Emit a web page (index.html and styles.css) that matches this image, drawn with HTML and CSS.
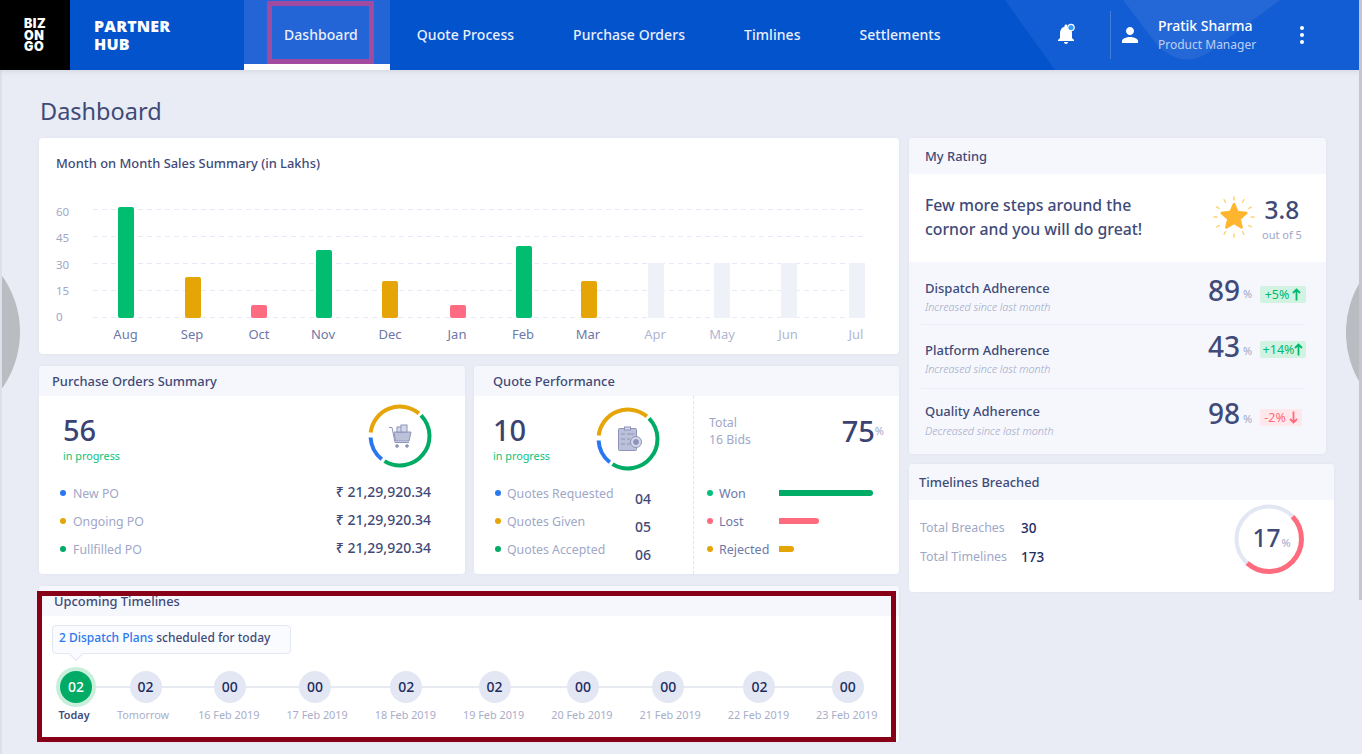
FILE: index.html
```html
<!DOCTYPE html>
<html lang="en">
<head>
    <meta charset="UTF-8">
    <meta name="viewport" content="width=device-width, initial-scale=1.0">
    <title>Partner Hub - Dashboard</title>
    <link rel="stylesheet" href="styles.css">
</head>
<body>
    <!-- Top bar -->
    <header class="topbar">
        <svg class="topbar-bg" width="1362" height="70" viewBox="0 0 1362 70">
            <path d="M1005 0L1055 70H1362V0Z" fill="#135dd4"/>
            <path d="M1123 0L1158 46Q1185 72 1215 48L1280 0Z" fill="#2467d6"/>
        </svg>
        <div class="logo">BIZ<br>ON<br>GO</div>
        <div class="brand">PARTNER<br>HUB</div>
        <nav class="nav">
            <a class="nav-item active">Dashboard<span class="mark-purple"></span></a>
            <a class="nav-item">Quote Process</a>
            <a class="nav-item">Purchase Orders</a>
            <a class="nav-item">Timlines</a>
            <a class="nav-item">Settlements</a>
        </nav>
        <div class="user-area">
            <svg class="bell" width="24" height="24" viewBox="0 0 24 24">
                <path fill="#fff" d="M12 22c1.1 0 2-.9 2-2h-4c0 1.1.9 2 2 2zm6-6v-5c0-3.07-1.63-5.64-4.5-6.32V4c0-.83-.67-1.5-1.5-1.5s-1.5.67-1.5 1.5v.68C7.64 5.36 6 7.92 6 11v5l-2 2v1h16v-1l-2-2z"/>
                <circle cx="17" cy="5.5" r="3.2" fill="#2f9bff" stroke="#fff" stroke-width="1.2"/>
            </svg>
            <div class="divider"></div>
            <svg class="person" width="24" height="24" viewBox="0 0 24 24">
                <path fill="#fff" d="M12 12c2.21 0 4-1.79 4-4s-1.79-4-4-4-4 1.79-4 4 1.79 4 4 4zm0 2c-2.67 0-8 1.34-8 4v2h16v-2c0-2.66-5.33-4-8-4z"/>
            </svg>
            <div class="user-info">
                <div class="user-name">Pratik Sharma</div>
                <div class="user-role">Product Manager</div>
            </div>
            <svg class="more" width="6" height="20" viewBox="0 0 6 20">
                <circle cx="3" cy="3" r="2" fill="#fff"/>
                <circle cx="3" cy="10" r="2" fill="#fff"/>
                <circle cx="3" cy="17" r="2" fill="#fff"/>
            </svg>
        </div>
    </header>

    <svg class="edge-left" width="20" height="118" viewBox="0 0 20 118"><path d="M0 0A97 97 0 0 1 0 118Z" fill="#b9bcc0"/></svg>
    <svg class="edge-right" width="16" height="107" viewBox="0 0 16 107"><path d="M16 0A97 97 0 0 0 16 107Z" fill="#b9bcc0"/></svg>
    <div class="scroll-line"></div>

    <main class="page">
        <h1 class="page-title">Dashboard</h1>
        <div class="columns">
            <div class="col-left">
                <!-- Sales chart -->
                <section class="card sales">
                    <h2 class="sales-title">Month on Month Sales Summary (in Lakhs)</h2>
                    <svg class="chart" width="860" height="216" viewBox="39 138 860 216">
                        <g class="grid">
                            <line x1="93" x2="865" y1="209.5" y2="209.5"/>
                            <line x1="93" x2="865" y1="236.5" y2="236.5"/>
                            <line x1="93" x2="865" y1="263.5" y2="263.5"/>
                            <line x1="93" x2="865" y1="290.5" y2="290.5"/>
                            <line x1="93" x2="865" y1="317.5" y2="317.5"/>
                        </g>
                        <g class="y-labels">
                            <text x="56" y="216">60</text>
                            <text x="56" y="242">45</text>
                            <text x="56" y="269">30</text>
                            <text x="56" y="295">15</text>
                            <text x="56" y="321">0</text>
                        </g>
                        <g>
                            <rect x="118" y="207" width="16" height="111" rx="2" fill="#00bd70"/>
                            <rect x="185" y="277" width="16" height="41" rx="2" fill="#e5a506"/>
                            <rect x="251" y="305" width="16" height="13" rx="2" fill="#ff6b81"/>
                            <rect x="316" y="250" width="16" height="68" rx="2" fill="#00bd70"/>
                            <rect x="382" y="281" width="16" height="37" rx="2" fill="#e5a506"/>
                            <rect x="450" y="305" width="16" height="13" rx="2" fill="#ff6b81"/>
                            <rect x="516" y="246" width="16" height="72" rx="2" fill="#00bd70"/>
                            <rect x="581" y="281" width="16" height="37" rx="2" fill="#e5a506"/>
                            <rect x="648" y="263" width="16" height="55" fill="#eef1f8"/>
                            <rect x="714" y="263" width="16" height="55" fill="#eef1f8"/>
                            <rect x="781" y="263" width="16" height="55" fill="#eef1f8"/>
                            <rect x="849" y="263" width="16" height="55" fill="#eef1f8"/>
                        </g>
                        <g class="x-labels">
                            <text x="125.5" y="339">Aug</text>
                            <text x="192" y="339">Sep</text>
                            <text x="259" y="339">Oct</text>
                            <text x="323" y="339">Nov</text>
                            <text x="390" y="339">Dec</text>
                            <text x="457" y="339">Jan</text>
                            <text x="523" y="339">Feb</text>
                            <text x="588" y="339">Mar</text>
                        </g>
                        <g class="x-labels future">
                            <text x="655" y="339">Apr</text>
                            <text x="722" y="339">May</text>
                            <text x="788" y="339">Jun</text>
                            <text x="856" y="339">Jul</text>
                        </g>
                    </svg>
                </section>

                <div class="summary-row">
                    <!-- Purchase orders -->
                    <section class="card po">
                        <h2 class="card-head">Purchase Orders Summary</h2>
                        <div class="po-body">
                            <div class="po-top">
                                <div class="count-block">
                                    <div class="count">56</div>
                                    <div class="in-progress">in progress</div>
                                </div>
                                <svg class="donut" width="64" height="64" viewBox="-32 -32 64 64">
                                    <path class="arc gold" d="M-29.3 -3.5A29.5 29.5 0 0 1 18.9 -22.6"/>
                                    <path class="arc green" d="M21 -20.7A29.5 29.5 0 0 1 -15.5 25.1"/>
                                    <path class="arc blue" d="M-29.4 1.5A29.5 29.5 0 0 0 -18.2 23.2"/>
                                    <g class="icon-shape">
                                        <path d="M-11 -8.5h3l3 15h14" fill="none"/>
                                        <path d="M-6 -4H11L9 5H-4.5Z" class="icon-fill"/>
                                        <rect x="-3" y="-9" width="6" height="5" class="icon-light"/>
                                        <rect x="1" y="-11" width="6" height="7" class="icon-light"/>
                                        <circle cx="-3" cy="10" r="1.3"/>
                                        <circle cx="7" cy="10" r="1.3"/>
                                    </g>
                                </svg>
                            </div>
                            <div class="po-row"><span class="dot d-blue"></span><span class="muted">New PO</span><span class="po-val">₹ 21,29,920.34</span></div>
                            <div class="po-row"><span class="dot d-gold"></span><span class="muted">Ongoing PO</span><span class="po-val">₹ 21,29,920.34</span></div>
                            <div class="po-row"><span class="dot d-green"></span><span class="muted">Fullfilled PO</span><span class="po-val">₹ 21,29,920.34</span></div>
                        </div>
                    </section>

                    <!-- Quote performance -->
                    <section class="card quote">
                        <h2 class="card-head quote-head">Quote Performance</h2>
                        <div class="quote-body">
                            <div class="quote-left">
                                <div class="quote-top">
                                    <div class="count-block">
                                        <div class="count">10</div>
                                        <div class="in-progress">in progress</div>
                                    </div>
                                    <svg class="donut" width="64" height="64" viewBox="-32 -32 64 64">
                                        <path class="arc gold" d="M-29.3 -3.5A29.5 29.5 0 0 1 18.9 -22.6"/>
                                        <path class="arc green" d="M21 -20.7A29.5 29.5 0 0 1 -15.5 25.1"/>
                                        <path class="arc blue" d="M-29.4 1.5A29.5 29.5 0 0 0 -18.2 23.2"/>
                                        <g class="icon-shape">
                                            <rect x="-9.5" y="-10.5" width="18" height="22" rx="1" class="icon-fill"/>
                                            <rect x="-3.5" y="-12" width="6" height="3" class="icon-light"/>
                                            <path d="M-7 -5h4M-7 0h4M-7 5h4M-1 -5h7M-1 0h3M-1 5h3" fill="none"/>
                                            <circle cx="8" cy="3" r="5.5" class="icon-light"/>
                                            <circle cx="8" cy="3" r="2.5"/>
                                        </g>
                                    </svg>
                                </div>
                                <div class="quote-row"><span class="dot d-blue"></span><span class="muted q-label">Quotes Requested</span><span class="q-num">04</span></div>
                                <div class="quote-row"><span class="dot d-gold"></span><span class="muted q-label">Quotes Given</span><span class="q-num">05</span></div>
                                <div class="quote-row"><span class="dot d-green"></span><span class="muted q-label">Quotes Accepted</span><span class="q-num">06</span></div>
                            </div>
                            <div class="quote-right">
                                <div class="bids">
                                    <div class="muted bids-text">Total<br>16 Bids</div>
                                    <div class="count bids-pct">75<span class="pct">%</span></div>
                                </div>
                                <div class="bid-row"><span class="dot d-won"></span><span class="bid-label">Won</span><span class="bar bar-won"></span></div>
                                <div class="bid-row"><span class="dot d-lost"></span><span class="bid-label">Lost</span><span class="bar bar-lost"></span></div>
                                <div class="bid-row"><span class="dot d-gold"></span><span class="bid-label">Rejected</span><span class="bar bar-rej"></span></div>
                            </div>
                        </div>
                    </section>
                </div>

                <!-- Upcoming timelines -->
                <section class="card upcoming">
                    <h2 class="card-head upcoming-head">Upcoming Timelines</h2>
                    <div class="tip"><span class="tip-link">2 Dispatch Plans</span> scheduled for today</div>
                    <div class="steps">
                        <div class="step today"><span class="node">02</span><span class="step-label">Today</span></div>
                        <div class="step tomorrow"><span class="node">02</span><span class="step-label">Tomorrow</span></div>
                        <div class="step"><span class="node">00</span><span class="step-label">16 Feb 2019</span></div>
                        <div class="step back"><span class="node">00</span><span class="step-label">17 Feb 2019</span></div>
                        <div class="step"><span class="node">02</span><span class="step-label">18 Feb 2019</span></div>
                        <div class="step"><span class="node">02</span><span class="step-label">19 Feb 2019</span></div>
                        <div class="step"><span class="node">00</span><span class="step-label">20 Feb 2019</span></div>
                        <div class="step back"><span class="node">00</span><span class="step-label">21 Feb 2019</span></div>
                        <div class="step"><span class="node">02</span><span class="step-label">22 Feb 2019</span></div>
                        <div class="step"><span class="node">00</span><span class="step-label">23 Feb 2019</span></div>
                    </div>
                    <div class="mark-red"></div>
                </section>
            </div>

            <div class="col-right">
                <!-- Rating -->
                <section class="card rating">
                    <h2 class="card-head rating-head">My Rating</h2>
                    <div class="rating-hero">
                        <p class="rating-text">Few more steps around the<br>cornor and you will do great!</p>
                        <svg class="star" width="44" height="44" viewBox="-22 -22 44 44">
                            <g class="rays">
                                <line y1="-20.5" y2="-16.5"/>
                                <line y1="-20.5" y2="-16.5" transform="rotate(30)"/>
                                <line y1="-20.5" y2="-16.5" transform="rotate(60)"/>
                                <line y1="-20.5" y2="-16.5" transform="rotate(90)"/>
                                <line y1="-20.5" y2="-16.5" transform="rotate(120)"/>
                                <line y1="-20.5" y2="-16.5" transform="rotate(150)"/>
                                <line y1="-20.5" y2="-16.5" transform="rotate(180)"/>
                                <line y1="-20.5" y2="-16.5" transform="rotate(210)"/>
                                <line y1="-20.5" y2="-16.5" transform="rotate(240)"/>
                                <line y1="-20.5" y2="-16.5" transform="rotate(270)"/>
                                <line y1="-20.5" y2="-16.5" transform="rotate(300)"/>
                                <line y1="-20.5" y2="-16.5" transform="rotate(330)"/>
                            </g>
                            <polygon points="0,-13 3.5,-4.9 12.4,-4 5.7,1.9 7.6,10.5 0,6 -7.6,10.5 -5.7,1.9 -12.4,-4 -3.5,-4.9" fill="#ffb52e" stroke="#ffb52e" stroke-width="2.5" stroke-linejoin="round"/>
                        </svg>
                        <div class="score">
                            <div class="score-num">3.8</div>
                            <div class="score-of">out of 5</div>
                        </div>
                    </div>
                    <div class="rate-row">
                        <div>
                            <div class="rate-title">Dispatch Adherence</div>
                            <div class="rate-sub">Increased since last month</div>
                        </div>
                        <div class="metric">
                            <span class="metric-num">89</span><span class="pct">%</span>
                            <span class="pill up">+5% <svg class="arrow" width="9" height="13" viewBox="0 0 9 13"><path d="M4.5 12.5V1.5M1 5l3.5-3.5L8 5"/></svg></span>
                        </div>
                    </div>
                    <div class="rate-row mid">
                        <div>
                            <div class="rate-title">Platform Adherence</div>
                            <div class="rate-sub">Increased since last month</div>
                        </div>
                        <div class="metric">
                            <span class="metric-num">43</span><span class="pct">%</span>
                            <span class="pill up tight">+14%<svg class="arrow" width="9" height="13" viewBox="0 0 9 13"><path d="M4.5 12.5V1.5M1 5l3.5-3.5L8 5"/></svg></span>
                        </div>
                    </div>
                    <div class="rate-row last">
                        <div>
                            <div class="rate-title">Quality Adherence</div>
                            <div class="rate-sub">Decreased since last month</div>
                        </div>
                        <div class="metric">
                            <span class="metric-num">98</span><span class="pct">%</span>
                            <span class="pill down">-2% <svg class="arrow" width="9" height="13" viewBox="0 0 9 13"><path d="M4.5 .5V11.5M1 8l3.5 3.5L8 8"/></svg></span>
                        </div>
                    </div>
                </section>

                <!-- Breaches -->
                <section class="card breached">
                    <h2 class="card-head breached-head">Timelines Breached</h2>
                    <div class="breached-body">
                        <div class="breach-list">
                            <div class="breach-row"><span class="muted breach-label">Total Breaches</span><span class="breach-val">30</span></div>
                            <div class="breach-row"><span class="muted breach-label">Total Timelines</span><span class="breach-val">173</span></div>
                        </div>
                        <div class="ring">
                            <svg width="70" height="70" viewBox="-35 -35 70 70">
                                <circle r="32.5" fill="none" stroke="#e2e7f3" stroke-width="4"/>
                                <path d="M23.57 -22.37A32.5 32.5 0 0 1 -21.75 24.15" fill="none" stroke="#ff6b7e" stroke-width="5"/>
                            </svg>
                            <div class="ring-text">17<span class="pct">%</span></div>
                        </div>
                    </div>
                </section>
            </div>
        </div>
    </main>
</body>
</html>
```
FILE: styles.css
```css
/* Base */
* {
    box-sizing: border-box;
}
html, body {
    height: 100%;
}
body {
    margin: 0;
    height: 754px;
    overflow: hidden;
    position: relative;
    font-family: "Noto Sans", "Open Sans", Arial, sans-serif;
    background-color: #e9ecf5;
    color: #3f4a78;
}
h1, h2, p {
    margin: 0;
    font-weight: 500;
}

/* Top bar */
.topbar {
    position: relative;
    display: flex;
    height: 70px;
    background-color: #0353cc;
    color: #fff;
    box-shadow: 0 1px 6px rgba(0, 0, 0, 0.1);
    z-index: 2;
}
.topbar-bg {
    position: absolute;
    left: 0;
    top: 0;
}
.logo {
    position: relative;
    width: 70px;
    padding: 18px 0 0 24px;
    background-color: #000;
    font-family: Inter, sans-serif;
    font-size: 12.5px;
    font-weight: 900;
    line-height: 11.5px;
    letter-spacing: 0.5px;
}
.brand {
    position: relative;
    width: 174px;
    padding: 17px 0 0 24px;
    font-family: "Open Sans", sans-serif;
    font-size: 16px;
    font-weight: 800;
    line-height: 18px;
    letter-spacing: 0.2px;
}
.nav {
    position: relative;
    display: flex;
}
.nav-item {
    display: flex;
    align-items: center;
    padding: 0 32px 1px 27px;
    font-size: 14px;
    font-weight: 500;
    letter-spacing: 0.05px;
    color: #e9effd;
}
.nav-item.active {
    position: relative;
    padding-left: 40px;
    padding-top: 5px;
    padding-bottom: 0;
    background-color: #2365d6;
    border-bottom: 6px solid #fff;
}
.mark-purple {
    position: absolute;
    left: 23px;
    top: 1px;
    width: 107px;
    height: 63px;
    border: 5px solid #a04aa0;
}
.user-area {
    position: relative;
    display: flex;
    align-items: center;
    margin-left: auto;
    margin-right: 57px;
}
.divider {
    width: 1px;
    height: 48px;
    margin: 0 7px 0 32px;
    background-color: rgba(255, 255, 255, 0.2);
}
.user-info {
    margin-left: 16px;
    width: 141px;
}
.user-name {
    font-size: 14px;
    font-weight: 500;
    line-height: 20px;
}
.user-role {
    font-size: 12px;
    line-height: 18px;
    color: #bdd0f3;
}
.bell {
    margin-top: -2px;
}

/* Things around the page */
.edge-left {
    position: absolute;
    left: 0;
    top: 273px;
}
.edge-right {
    position: absolute;
    right: 0;
    top: 279px;
}
.scroll-line {
    position: absolute;
    top: 0;
    right: 0;
    width: 3px;
    height: 600px;
    background-color: #c3c6d0;
    z-index: 3;
}

/* Page */
.page {
    position: relative;
    height: 684px;
    padding: 25px 0 0 37px;
    border-left: 2px solid #dde0ea;
}
.page-title {
    margin-left: 1px;
    margin-bottom: 11px;
    font-size: 23.5px;
    font-weight: 400;
    line-height: 32px;
    color: #3f4a78;
}
.columns {
    display: flex;
    gap: 10px;
}
.col-left {
    width: 860px;
}
.col-right {
    width: 425px;
}

/* Cards */
.card {
    position: relative;
    background-color: #fff;
    border-radius: 4px;
    box-shadow: 0 0 3px rgba(60, 70, 120, 0.06);
}
.card-head {
    height: 30px;
    padding-left: 13px;
    font-size: 12.9px;
    line-height: 30px;
    background-color: #f6f7fc;
    border-radius: 4px 4px 0 0;
}
.muted {
    font-size: 12.3px;
    color: #a0a7c8;
}
.pct {
    font-size: 11px;
    font-weight: 400;
    color: #a0a7c8;
}
.dot {
    display: inline-block;
    width: 6px;
    height: 6px;
    border-radius: 50%;
    flex-shrink: 0;
}
.d-blue { background-color: #2a78f0; }
.d-gold { background-color: #e5a506; }
.d-green { background-color: #00ab66; }
.d-won { background-color: #00c07a; }
.d-lost { background-color: #ff6b7e; }

/* Sales */
.sales {
    height: 216px;
    margin-bottom: 12px;
}
.sales-title {
    position: absolute;
    left: 17px;
    top: 15px;
    font-size: 12.9px;
    line-height: 20px;
}
.chart {
    display: block;
    font-family: "Noto Sans", sans-serif;
}
.grid line {
    stroke: #e6e9f7;
    stroke-width: 1;
    stroke-dasharray: 5 4;
}
.y-labels text {
    font-size: 11.5px;
    fill: #a0a7c8;
}
.x-labels text {
    font-size: 13px;
    fill: #6e78a8;
    text-anchor: middle;
}
.x-labels.future text {
    fill: #b0b6d2;
}

/* Summary cards */
.summary-row {
    display: flex;
    gap: 9px;
    margin-bottom: 12px;
}
.po {
    width: 426px;
    height: 208px;
}
.quote {
    width: 425px;
    height: 208px;
}
.po-body {
    padding: 8px 34px 0 21px;
}
.po-top {
    display: flex;
    justify-content: space-between;
    height: 75px;
    padding-left: 3px;
}
.po-top .donut {
    margin-right: -1px;
}
.count-block {
    padding-top: 8px;
}
.count {
    font-size: 29px;
    font-weight: 500;
    line-height: 36px;
    color: #3a4372;
}
.in-progress {
    font-size: 10.8px;
    line-height: 16px;
    color: #0fc27a;
}
.arc {
    fill: none;
    stroke-width: 4;
}
.gold { stroke: #e5a506; }
.green { stroke: #00ab66; }
.blue { stroke: #2a78f0; }
.icon-shape {
    fill: #8d94bb;
    stroke: #8d94bb;
    stroke-width: 1;
}
.icon-fill {
    fill: #bcc1da;
}
.icon-light {
    fill: #d5d8e8;
}
.po-row {
    display: flex;
    align-items: center;
    height: 28px;
}
.po-row .muted {
    margin-left: 7px;
}
.po-val {
    margin-left: auto;
    margin-bottom: 4px;
    font-size: 14px;
    font-weight: 500;
    color: #3f4a78;
}

.quote-head {
    padding-left: 19px;
}
.quote-body {
    display: flex;
    height: 178px;
}
.quote-left {
    width: 220px;
    padding: 11px 0 0 19px;
    border-right: 1px dashed #dfe4f2;
}
.quote-top {
    display: flex;
    justify-content: space-between;
    height: 72px;
    padding-right: 33px;
}
.quote-top .count-block {
    padding-top: 5px;
}
.quote-row {
    position: relative;
    display: flex;
    align-items: center;
    height: 28px;
    margin-left: 2px;
}
.q-label {
    margin-left: 6px;
}
.q-num {
    position: absolute;
    left: 140px;
    top: 10px;
    font-size: 14px;
    font-weight: 500;
    line-height: 20px;
}
.quote-right {
    flex: 1;
    padding: 18px 15px 0 15px;
}
.bids {
    display: flex;
    justify-content: space-between;
    height: 65px;
}
.bids-text {
    line-height: 17px;
}
.bids-pct {
    line-height: 36px;
    margin-top: -1px;
}
.bids-pct .pct {
    vertical-align: 7px;
}
.bid-row {
    display: flex;
    align-items: center;
    height: 28px;
    margin-left: -2px;
}
.bid-label {
    width: 60px;
    margin-left: 6px;
    font-size: 12.5px;
    color: #6e78a8;
}
.bar {
    height: 6px;
    border-radius: 0 3px 3px 0;
}
.bar-won { width: 94px; background-color: #00ab66; }
.bar-lost { width: 40px; background-color: #ff6b7e; }
.bar-rej { width: 15px; background-color: #e5a506; }

/* Upcoming */
.upcoming {
    height: 156px;
}
.upcoming-head {
    padding-left: 15px;
}
.tip {
    position: relative;
    width: 239px;
    height: 29px;
    margin: 9px 0 0 13px;
    padding-left: 6px;
    font-size: 12px;
    font-weight: 500;
    line-height: 24px;
    background-color: #fafbfe;
    border: 1px solid #e3e7f2;
    border-radius: 4px;
}
.tip::after {
    content: "";
    position: absolute;
    left: 18px;
    bottom: -6px;
    width: 9px;
    height: 9px;
    background-color: #fafbfe;
    border-right: 1px solid #e3e7f2;
    border-bottom: 1px solid #e3e7f2;
    transform: rotate(45deg);
}
.tip-link {
    color: #2a78f0;
}
.steps {
    position: relative;
    display: flex;
    gap: 27px;
    margin: 17px 0 0 17px;
}
.steps::before {
    content: "";
    position: absolute;
    left: 20px;
    width: 771px;
    top: 15px;
    height: 2px;
    background-color: #e8eaf2;
}
.step {
    position: relative;
    display: flex;
    flex-direction: column;
    align-items: center;
}
.node {
    width: 32px;
    height: 32px;
    margin-left: 2px;
    border-radius: 50%;
    font-size: 14px;
    font-weight: 500;
    line-height: 32px;
    text-align: center;
    color: #1d2b5e;
    background-color: #e2e7f3;
}
.today {
    margin-right: -2px;
}
.today .node {
    margin-left: 4px;
    color: #fff;
    background-color: #00ab66;
    box-shadow: 0 0 0 4px #c8efdc;
}
.tomorrow {
    margin-right: 2px;
}
.tomorrow .node {
    margin-left: 5px;
}
.back .node {
    margin-left: -4px;
}
.step-label {
    margin-top: 4px;
    font-size: 10.85px;
    line-height: 16px;
    white-space: nowrap;
    color: #a8aeca;
}
.today .step-label {
    font-weight: 600;
    color: #3f4a78;
}
.mark-red {
    position: absolute;
    left: -2px;
    top: 5px;
    width: 859px;
    height: 151px;
    border: 5px solid #880018;
}

/* Rating */
.rating {
    width: 417px;
    height: 316px;
    margin-bottom: 10px;
    background-color: #f5f7fc;
}
.rating-head {
    height: 36px;
    padding-left: 16px;
    line-height: 37px;
}
.rating-hero {
    display: flex;
    height: 88px;
    padding-left: 16px;
    background-color: #fff;
}
.rating-text {
    width: 288px;
    padding-top: 19px;
    font-size: 15.8px;
    line-height: 24px;
}
.star {
    margin: 21px 0 0 -1px;
}
.rays line {
    stroke: #ffcb5c;
    stroke-width: 1.3;
}
.score {
    margin-left: 6px;
    padding-top: 18px;
    text-align: center;
}
.score-num {
    font-size: 24.5px;
    font-weight: 500;
    line-height: 36px;
}
.score-of {
    font-size: 11px;
    line-height: 14px;
    color: #a0a7c8;
}
.rate-row {
    display: flex;
    justify-content: space-between;
    height: 63px;
    margin: 0 22px 0 12px;
    padding: 16px 0 0 4px;
    border-bottom: 1px solid #eceef6;
}
.rate-row.mid {
    height: 64px;
    padding-top: 15px;
}
.rate-row.last {
    border-bottom: 0;
    padding-top: 12px;
}
.rate-title {
    font-size: 13px;
    font-weight: 500;
    line-height: 20px;
}
.rate-sub {
    font-size: 10.8px;
    font-style: italic;
    font-weight: 300;
    line-height: 18px;
    color: #a0a7c8;
}
.last .rate-sub {
    margin-top: 1px;
}
.metric {
    display: flex;
    align-items: flex-start;
    margin-right: -2px;
}
.mid .metric {
    margin-top: -7px;
}
.metric-num {
    font-size: 28px;
    font-weight: 500;
    line-height: 28px;
    margin-top: -2px;
}
.mid .metric-num {
    margin-top: -1px;
}
.metric .pct {
    width: 17px;
    margin-left: 3px;
    margin-top: 8px;
}
.mid .pct, .last .pct {
    margin-top: 10px;
}
.pill {
    display: flex;
    align-items: center;
    justify-content: center;
    width: 46px;
    height: 17px;
    margin-top: 8px;
    gap: 3px;
    border-radius: 2px;
    font-size: 12.5px;
}
.pill.tight {
    gap: 0;
}
.pill.up {
    color: #00b96f;
    background-color: #d2f3e2;
}
.pill.down {
    width: 42px;
    margin-right: 4px;
    color: #ff6b7e;
    background-color: #ffe8eb;
}
.arrow {
    fill: none;
    stroke: currentColor;
    stroke-width: 1.8;
}

/* Breached */
.breached {
    height: 128px;
}
.breached-head {
    height: 36px;
    padding-left: 10px;
    line-height: 36px;
}
.breached-body {
    display: flex;
    justify-content: space-between;
    padding: 4px 30px 0 11px;
}
.breach-list {
    padding-top: 9px;
}
.breach-row {
    display: flex;
    align-items: center;
    height: 29px;
}
.breach-label {
    width: 101px;
    font-size: 12.4px;
}
.breach-val {
    font-size: 13.5px;
    font-weight: 500;
    color: #1d2b5e;
}
.ring {
    position: relative;
    width: 70px;
    height: 70px;
}
.ring svg {
    display: block;
}
.ring-text {
    position: absolute;
    left: 18.5px;
    top: 16px;
    font-size: 24.5px;
    font-weight: 500;
    line-height: 36px;
    white-space: nowrap;
}
.ring-text .pct {
    margin-left: 1px;
}
```
